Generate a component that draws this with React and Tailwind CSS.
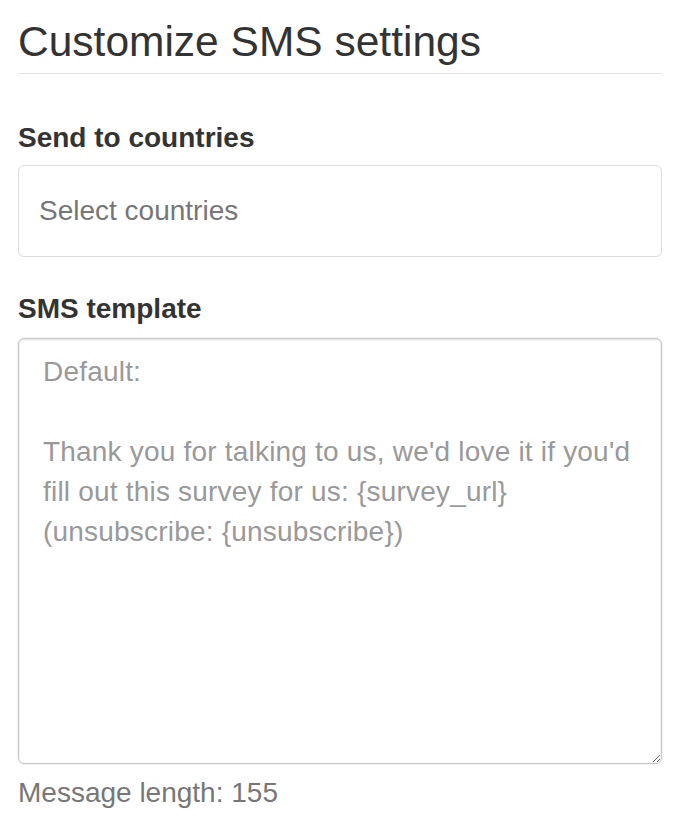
import React from 'react'

const placeholder =
  "Default:\n\nThank you for talking to us, we'd love it if you'd fill out this survey for us: {survey_url} (unsubscribe: {unsubscribe})"

export default function App() {
  return (
    <div className="bg-white pl-[18px] pr-[14px] pt-[19px] font-['Liberation_Sans',Arial,sans-serif] text-[#333]">
      <h3 className="border-b border-[#e5e5e5] pb-[8px] text-[42.5px] leading-[46px]">Customize SMS settings</h3>

      <label className="mt-[44px] block text-[28px] font-bold leading-[40px]">Send to countries</label>
      <div className="mt-[7px] flex h-[92px] items-center rounded-[6px] border border-[#dcdcdc] px-[20px] text-[28px] text-[#767676]">
        Select countries
      </div>

      <label className="mt-[32px] block text-[28px] font-bold leading-[40px]">SMS template</label>
      <textarea
        className="mt-[9px] block h-[426px] w-full rounded-[6px] border border-[#c6c6c6] px-[24px] pt-[13px] text-[28px] leading-[40px] tracking-[0.2px] shadow-[inset_0_1px_2px_rgba(0,0,0,0.12),0_0_0_1px_rgba(0,0,0,0.04)] outline-none placeholder:text-[#999]"
        placeholder={placeholder}
      />
      <p className="mt-[9px] text-[28px] leading-[40px] text-[#777]">Message length: 155</p>
    </div>
  )
}
